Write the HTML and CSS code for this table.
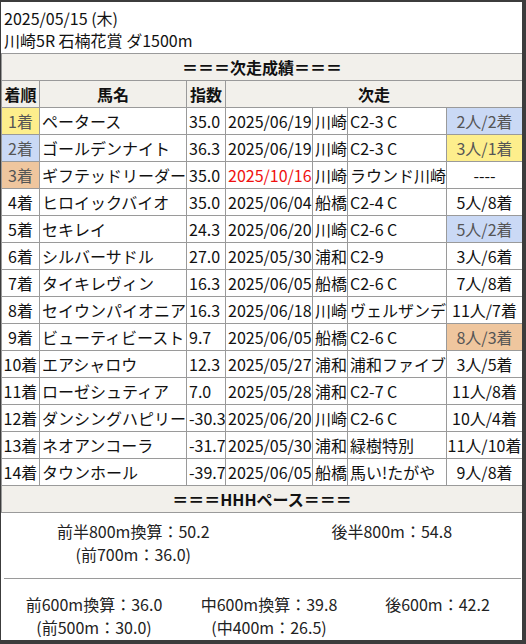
FILE: index.html
```html
<!DOCTYPE html>
<html lang="ja">
<head>
<meta charset="utf-8">
<link rel="stylesheet" href="styles.css">
</head>
<body>
<div class="page">
  <div class="head">
    <div>2025/05/15 (木)</div>
    <div>川崎5R 石楠花賞 ダ1500m</div>
  </div>
  <table class="res">
    <colgroup>
      <col class="c1"><col class="c2"><col class="c3"><col class="c4"><col class="c5"><col class="c6"><col class="c7">
    </colgroup>
    <tr class="sec"><td colspan="7">＝＝＝次走成績＝＝＝</td></tr>
    <tr class="hd"><td>着順</td><td>馬名</td><td>指数</td><td colspan="4">次走</td></tr>
    <tr><td class="ctr y">1着</td><td>ペータース</td><td>35.0</td><td>2025/06/19</td><td>川崎</td><td>C2-3 C</td><td class="ctr b">2人/2着</td></tr>
    <tr><td class="ctr b">2着</td><td>ゴールデンナイト</td><td>36.3</td><td>2025/06/19</td><td>川崎</td><td>C2-3 C</td><td class="ctr y">3人/1着</td></tr>
    <tr><td class="ctr o">3着</td><td>ギフテッドリーダー</td><td>35.0</td><td class="red">2025/10/16</td><td>川崎</td><td>ラウンド川崎</td><td class="ctr">----</td></tr>
    <tr><td class="ctr">4着</td><td>ヒロイックバイオ</td><td>35.0</td><td>2025/06/04</td><td>船橋</td><td>C2-4 C</td><td class="ctr">5人/8着</td></tr>
    <tr><td class="ctr">5着</td><td>セキレイ</td><td>24.3</td><td>2025/06/20</td><td>川崎</td><td>C2-6 C</td><td class="ctr b">5人/2着</td></tr>
    <tr><td class="ctr">6着</td><td>シルバーサドル</td><td>27.0</td><td>2025/05/30</td><td>浦和</td><td>C2-9</td><td class="ctr">3人/6着</td></tr>
    <tr><td class="ctr">7着</td><td>タイキレヴィン</td><td>16.3</td><td>2025/06/05</td><td>船橋</td><td>C2-6 C</td><td class="ctr">7人/8着</td></tr>
    <tr><td class="ctr">8着</td><td>セイウンパイオニア</td><td>16.3</td><td>2025/06/18</td><td>川崎</td><td>ヴェルザンデ</td><td class="ctr">11人/7着</td></tr>
    <tr><td class="ctr">9着</td><td>ビューティビースト</td><td>9.7</td><td>2025/06/05</td><td>船橋</td><td>C2-6 C</td><td class="ctr o">8人/3着</td></tr>
    <tr><td class="ctr">10着</td><td>エアシャロウ</td><td>12.3</td><td>2025/05/27</td><td>浦和</td><td>浦和ファイブ</td><td class="ctr">3人/5着</td></tr>
    <tr><td class="ctr">11着</td><td>ローゼシュティア</td><td>7.0</td><td>2025/05/28</td><td>浦和</td><td>C2-7 C</td><td class="ctr">11人/8着</td></tr>
    <tr><td class="ctr">12着</td><td>ダンシングハピリー</td><td>-30.3</td><td>2025/06/20</td><td>川崎</td><td>C2-6 C</td><td class="ctr">10人/4着</td></tr>
    <tr><td class="ctr">13着</td><td>ネオアンコーラ</td><td>-31.7</td><td>2025/05/30</td><td>浦和</td><td>緑樹特別</td><td class="ctr">11人/10着</td></tr>
    <tr><td class="ctr">14着</td><td>タウンホール</td><td>-39.7</td><td>2025/06/05</td><td>船橋</td><td>馬い!たがや</td><td class="ctr">9人/8着</td></tr>
    <tr class="sec"><td colspan="7">＝＝＝HHHペース＝＝＝</td></tr>
  </table>
  <div class="pace">
    <div class="pace-two">
      <div class="pc"><div>前半800m換算：50.2</div><div>(前700m：36.0)</div></div>
      <div class="pc"><div>後半800m：54.8</div></div>
    </div>
    <div class="pace-three">
      <div class="pc"><div>前600m換算：36.0</div><div>(前500m：30.0)</div></div>
      <div class="pc"><div>中600m換算：39.8</div><div>(中400m：26.5)</div></div>
      <div class="pc"><div>後600m：42.2</div></div>
    </div>
  </div>
</div>
</body>
</html>
```

FILE: styles.css
```css
html, body {
  margin: 0;
  padding: 0;
}
body {
  background: #3c3c3c;
  font-family: "Noto Sans CJK JP", "Noto Sans", sans-serif;
  font-size: 16px;
  color: #111;
}
.page {
  margin: 2px 4px 4px 1px;
  height: 638px;
  background: #fff;
  overflow: hidden;
}
.head {
  padding: 5px 3px 2px;
  line-height: 22px;
}
.res {
  border-collapse: collapse;
  table-layout: fixed;
  width: 521px;
}
.c1 { width: 38px; }
.c2 { width: 147px; }
.c3 { width: 39px; }
.c4 { width: 87px; }
.c5 { width: 35px; }
.c6 { width: 99px; }
.c7 { width: 76px; }
.res td {
  border: 1px solid #9a9a9a;
  padding: 0 0 0 2px;
  height: 26px;
  line-height: 26px;
  white-space: nowrap;
  overflow: hidden;
}
.res .sec td,
.res .hd td {
  background: #f2f0eb;
  font-weight: bold;
  text-align: center;
  padding: 0;
}
.res td.ctr {
  text-align: center;
  padding: 0;
}
.y { background: #fdee8c; color: #555; }
.b { background: #cad9f5; color: #555; }
.o { background: #efc69e; color: #555; }
.red { color: #f01010; }
.pace {
  padding: 0 1px 0 3px;
  color: #222;
  line-height: 23px;
}
.pace-two {
  display: grid;
  grid-template-columns: 1fr 1fr;
  padding: 7px 0 12px;
  border-bottom: 1px solid #9a9a9a;
}
.pace-three {
  display: grid;
  grid-template-columns: 180px 170px 1fr;
  padding-top: 14px;
}
.pc {
  text-align: center;
}
```
